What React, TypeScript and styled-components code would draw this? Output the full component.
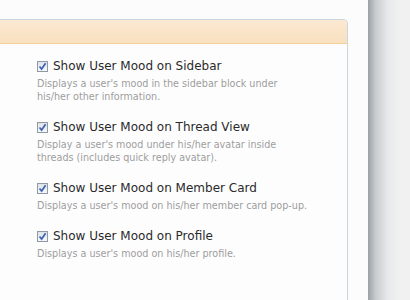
import { FC } from "react";
import styled, { createGlobalStyle } from "styled-components";

const GlobalStyle = createGlobalStyle`
  html, body {
    margin: 0;
    padding: 0;
    background: #fcfcfd;
  }
  body {
    font-family: "DejaVu Sans", Verdana, sans-serif;
  }
`;

type Option = {
  label: string;
  hint: string[];
};

// hint lines are kept as in the original layout
const options: Option[] = [
  {
    label: "Show User Mood on Sidebar",
    hint: ["Displays a user's mood in the sidebar block under", "his/her other information."],
  },
  {
    label: "Show User Mood on Thread View",
    hint: ["Display a user's mood under his/her avatar inside", "threads (includes quick reply avatar)."],
  },
  {
    label: "Show User Mood on Member Card",
    hint: ["Displays a user's mood on his/her member card pop-up."],
  },
  {
    label: "Show User Mood on Profile",
    hint: ["Displays a user's mood on his/her profile."],
  },
];

const CheckMark: FC = () => (
  <svg width="9" height="9" viewBox="0 0 9 9">
    <path d="M1.5 4.5 L3.6 7 L7.6 1.2" fill="none" stroke="#3b62b3" strokeWidth="1.7" />
  </svg>
);

const App: FC = () => (
  <>
    <GlobalStyle />
    <Page>
      <Panel>
        <PanelHeader />
        <List>
          {options.map((o) => (
            <Item key={o.label}>
              <Label>
                <CheckBox>
                  <CheckMark />
                </CheckBox>
                {o.label}
              </Label>
              <Hint>
                {o.hint.map((line) => (
                  <HintLine key={line}>{line}</HintLine>
                ))}
              </Hint>
            </Item>
          ))}
        </List>
      </Panel>
      <Shade />
    </Page>
  </>
);

const Page = styled.div`
  display: flex;
  height: 300px;
  overflow: hidden;
`;

const Panel = styled.div`
  margin-top: 19px;
  width: 347px;
  flex-shrink: 0;
  background: #fdfdfe;
  border: 1px solid #c9d6de;
  border-left: none;
  border-bottom: none;
  border-top-right-radius: 5px;
  margin-right: 20px;
`;

const PanelHeader = styled.div`
  height: 23px;
  background: linear-gradient(to bottom, #fbe9d2, #f9e0c0);
  border-bottom: 1px solid #f6cf9f;
  border-top-right-radius: 4px;
`;

const List = styled.div`
  display: flex;
  flex-direction: column;
  gap: 16px;
  padding: 14px 0 0 37px;
`;

const Item = styled.div`
  display: flex;
  flex-direction: column;
`;

const Label = styled.label`
  display: flex;
  align-items: center;
  gap: 5px;
  font-size: 12px;
  line-height: 16px;
  color: #2a2a2a;
`;

const CheckBox = styled.span`
  display: flex;
  align-items: center;
  justify-content: center;
  box-sizing: border-box;
  width: 11px;
  height: 11px;
  border: 1px solid #8f9aa6;
  background: linear-gradient(to bottom, #dfe3e8, #f7f8fa);
`;

const Hint = styled.div`
  margin-top: 3px;
  font-family: "DejaVu Sans Condensed", "DejaVu Sans", sans-serif;
  font-size: 10.7px;
  line-height: 13px;
  color: #9d9d9d;
`;

const HintLine = styled.div`
  white-space: nowrap;
`;

const Shade = styled.div`
  flex: 1;
  background: linear-gradient(to right, #9aa1a5 0px, #c9cdd0 8px, #e8e9ea 20px, #f1f1f1 32px);
`;

export default App;
